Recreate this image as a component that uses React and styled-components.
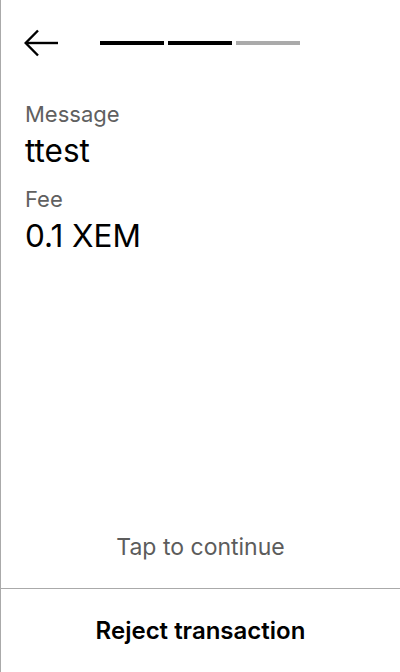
import styled, { createGlobalStyle } from 'styled-components'

const Global = createGlobalStyle`
  body {
    margin: 0;
    background: #fff;
    font-family: Inter, "Noto Sans", sans-serif;
  }
`

const Screen = styled.div`
  width: 400px;
  height: 672px;
  box-sizing: border-box;
  border-left: 1px solid #aaa;
  display: flex;
  flex-direction: column;
  color: #000;
`

const Header = styled.header`
  display: flex;
  align-items: center;
  height: 86px;
  padding-left: 23px;
  box-sizing: border-box;
`

const BackButton = styled.button`
  border: 0;
  background: none;
  padding: 0;
  width: 34px;
  height: 28px;
  display: flex;
  cursor: pointer;
`

const Steps = styled.div`
  display: flex;
  gap: 4px;
  margin-left: 42px;
`

const Step = styled.span`
  width: 64px;
  height: 4px;
  background: ${p => (p.$done ? '#000' : '#aaa')};
`

const Content = styled.main`
  flex: 1;
  padding: 14px 24px 0;
  display: flex;
  flex-direction: column;
`

const Label = styled.div`
  font-size: 22px;
  line-height: 28px;
  color: #606060;
  margin-bottom: 5px;
`

const Value = styled.div`
  font-size: 31.5px;
  line-height: 36px;
  margin-bottom: 16px;
`

const Hint = styled.div`
  text-align: center;
  font-size: 23px;
  line-height: 28px;
  color: #5c5c5c;
  padding-bottom: 27px;
`

const Footer = styled.button`
  height: 84px;
  border: 0;
  border-top: 1px solid #aaa;
  background: #fff;
  font-family: inherit;
  font-size: 24px;
  font-weight: 600;
  color: #000;
  cursor: pointer;
`

export default function App() {
  return (
    <Screen>
      <Global />
      <Header>
        <BackButton aria-label="Back">
          <svg width="34" height="28" viewBox="0 0 34 28" fill="none">
            <path d="M2 14H34" stroke="#000" strokeWidth="2.4" />
            <path d="M14 1.5L1.7 14L14 26.5" stroke="#000" strokeWidth="2.4" />
          </svg>
        </BackButton>
        <Steps>
          <Step $done />
          <Step $done />
          <Step />
        </Steps>
      </Header>
      <Content>
        <Label>Message</Label>
        <Value>ttest</Value>
        <Label>Fee</Label>
        <Value>0.1 XEM</Value>
      </Content>
      <Hint>Tap to continue</Hint>
      <Footer>Reject transaction</Footer>
    </Screen>
  )
}
